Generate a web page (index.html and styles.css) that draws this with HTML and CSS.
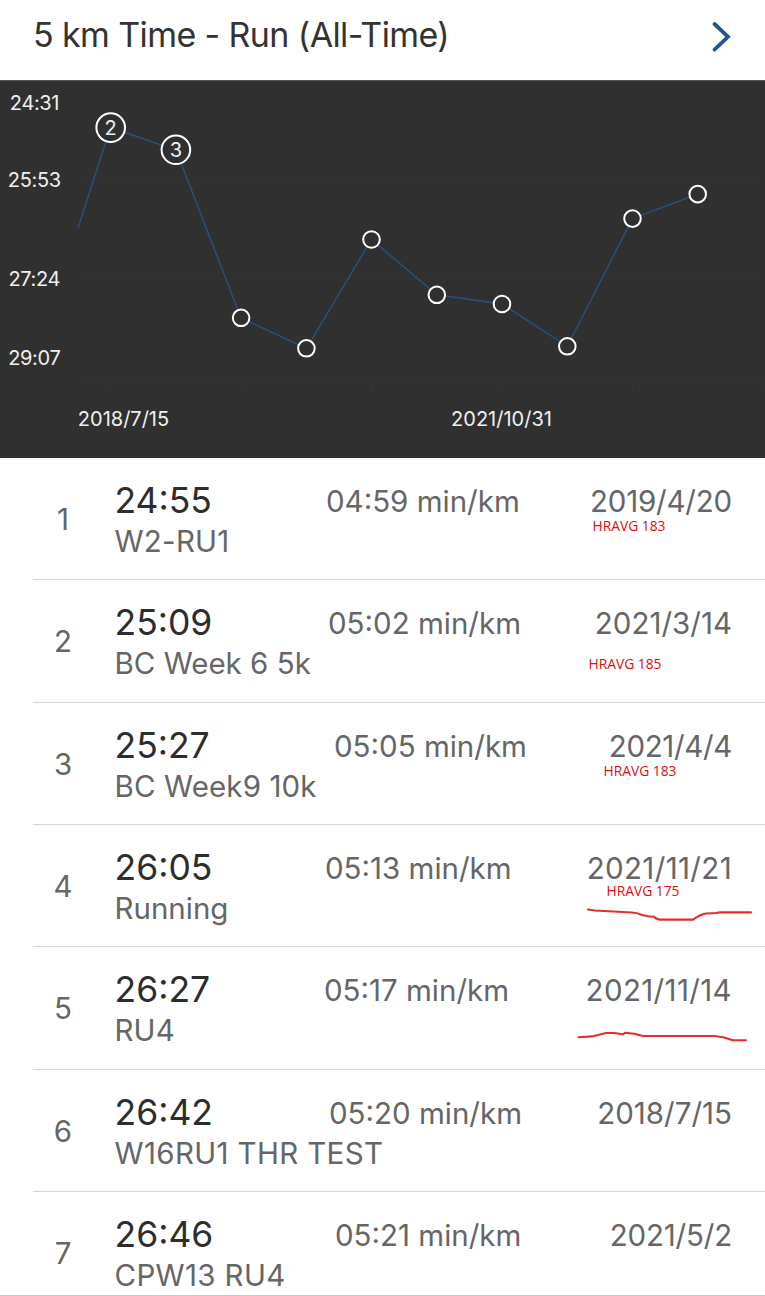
FILE: index.html
```html
<!DOCTYPE html>
<html lang="en">
<head>
<meta charset="utf-8">
<title>5 km Time - Run (All-Time)</title>
<link rel="stylesheet" href="styles.css">
</head>
<body>
<main class="screen">
  <header class="header">
    <h1 class="title">5 km Time - Run (All-Time)</h1>
    <svg class="chevron" width="22" height="34" viewBox="0 0 22 34"><path d="M3.500 4 17 16.800 3.500 29.600"/></svg>
  </header>
  <section class="chart">
    <svg width="765" height="378" viewBox="0 80 765 378">
      <path class="grid" d="M78 180.500H760M78 279H760M78 379H760M110.500 379v12M241 379v12M371.500 379v12M502 379v12M632.500 379v12M763 379v12"/>
      <path class="line" d="M78 228 110.500 127.500 176 150 241 318 306.500 348.300 371.500 239.500 436.800 294.800 502 304 567.300 346.300 632.500 218.600 697.700 194.100"/>
      <g class="points">
        <circle cx="110.700" cy="127.600" r="14.300"/><circle cx="175.900" cy="149.800" r="14.300"/>
        <circle cx="241.100" cy="317.800" r="8.300"/><circle cx="306.400" cy="348.300" r="8.300"/>
        <circle cx="371.500" cy="239.500" r="8.300"/><circle cx="436.800" cy="294.800" r="8.300"/>
        <circle cx="502" cy="304" r="8.300"/><circle cx="567.300" cy="346.300" r="8.300"/>
        <circle cx="632.500" cy="218.600" r="8.300"/><circle cx="697.700" cy="194.100" r="8.300"/>
      </g>
      <g class="labels">
        <g class="axis-y">
          <text x="34.500" y="110.300">24:31</text><text x="34.300" y="187.300">25:53</text>
          <text x="34.300" y="286.400">27:24</text><text x="34.300" y="364.800">29:07</text>
        </g>
        <text x="123.500" y="426.300">2018/7/15</text><text x="501.500" y="426.300">2021/10/31</text>
        <text x="110.700" y="135">2</text><text x="175.900" y="157.200">3</text>
      </g>
    </svg>
  </section>
  <ol class="list">
    <li class="row"><span class="rank">1</span><div class="run"><span class="time">24:55</span><span class="name wide-2">W2-RU1</span></div><span class="pace pace-1">04:59 min/km</span><span class="date tight-1">2019/4/20</span><span class="note note-1">HRAVG 183</span></li>
    <li class="row"><span class="rank">2</span><div class="run"><span class="time">25:09</span><span class="name">BC Week 6 5k</span></div><span class="pace pace-2">05:02 min/km</span><span class="date">2021/3/14</span><span class="note note-2">HRAVG 185</span></li>
    <li class="row"><span class="rank">3</span><div class="run"><span class="time">25:27</span><span class="name wide-1">BC Week9 10k</span></div><span class="pace pace-3">05:05 min/km</span><span class="date tight-2">2021/4/4</span><span class="note note-3">HRAVG 183</span></li>
    <li class="row"><span class="rank">4</span><div class="run"><span class="time">26:05</span><span class="name">Running</span></div><span class="pace pace-4">05:13 min/km</span><span class="date wide-3">2021/11/21</span><span class="note note-4">HRAVG 175</span>
      <svg class="scribble scribble-4" width="172" height="20" viewBox="584 904 172 20"><path d="M588 909.500 595 910.500 632 912.500Q638 913 642 915L648 916.300 654 916.700Q656 919.500 660 919.600H693Q700 914.500 706 913.500L716 913 720 912.400H751"/></svg></li>
    <li class="row"><span class="rank">5</span><div class="run"><span class="time">26:27</span><span class="name wide-1">RU4</span></div><span class="pace pace-5">05:17 min/km</span><span class="date wide-3">2021/11/14</span>
      <svg class="scribble scribble-5" width="176" height="20" viewBox="574 1027 176 20"><path d="M578.500 1037.200 592 1036.400 606 1033H614L623 1034.300 625 1032.800 634 1033.700 643 1036H715L724 1037.500 733 1040.200H746"/></svg></li>
    <li class="row"><span class="rank">6</span><div class="run"><span class="time">26:42</span><span class="name wide-3">W16RU1 THR TEST</span></div><span class="pace pace-6">05:20 min/km</span><span class="date">2018/7/15</span></li>
    <li class="row"><span class="rank">7</span><div class="run"><span class="time">26:46</span><span class="name wide-3">CPW13 RU4</span></div><span class="pace pace-7">05:21 min/km</span><span class="date tight-1">2021/5/2</span></li>
  </ol>
</main>
</body>
</html>
```
FILE: styles.css
```css
* { box-sizing: border-box; }
body { margin: 0; background: #fff; font-family: Inter, "Liberation Sans", sans-serif; }
.screen { width: 765px; height: 1296px; overflow: hidden; display: flex; flex-direction: column; }
.header { height: 80px; flex: none; display: flex; align-items: flex-start; justify-content: space-between; padding: 14px 32px 0 33px; }
.title { margin: 0; font-size: 34px; line-height: 41px; font-weight: 400; color: #333; letter-spacing: -0.600px; white-space: nowrap; }
.chevron { margin-top: 6px; fill: none; stroke: #24568a; stroke-width: 3.800; stroke-linecap: round; }
.chart { height: 378px; flex: none; background: #303030; border-top: 1px solid #555; }
.chart svg { display: block; margin-top: -1px; }
.grid { fill: none; stroke: #343434; stroke-width: 1; }
.line { fill: none; stroke: #265280; stroke-width: 1.400; }
.points { fill: #303030; stroke: #fff; stroke-width: 2; }
.labels { fill: #f0f0f0; font-size: 20px; text-anchor: middle; }
.axis-y { letter-spacing: -0.350px; }
.list { list-style: none; margin: 0; padding: 0; height: 838px; border-bottom: 1px solid #c8c8c8; overflow: hidden; }
.row { position: relative; height: 122.330px; margin-left: 33px; padding-right: 33px; display: flex; align-items: flex-start; border-bottom: 1px solid #d6d6d8; color: #666; font-size: 29.500px; line-height: 36px; white-space: nowrap; }
.row:last-child { border-bottom: 0; }
.rank { width: 60px; margin-top: 43px; text-align: center; }
.run { width: 200px; margin-left: 21.500px; padding-top: 21px; display: flex; flex-direction: column; }
.time { font-size: 35.500px; line-height: 44px; color: #2d2d2d; }
.name { line-height: 36px; }
.wide-1 { letter-spacing: 0.120px; }
.wide-2 { letter-spacing: 0.250px; }
.wide-3 { letter-spacing: 0.350px; }
.tight-1 { letter-spacing: -0.200px; }
.tight-2 { letter-spacing: -0.350px; }
.pace { margin-top: 25px; }
.date { margin: 25px 0 0 auto; }
.pace-1 { margin-left: 11.500px; }
.pace-2 { margin-left: 13.500px; }
.pace-3 { margin-left: 19.500px; }
.pace-4 { margin-left: 10.500px; }
.pace-5 { margin-left: 9.500px; }
.pace-6 { margin-left: 14.500px; }
.pace-7 { margin-left: 20.500px; }
.note { position: absolute; font-family: "Open Sans", "Noto Sans", sans-serif; font-size: 13.800px; line-height: 18px; color: #d9100f; }
.note-1 { left: 559.500px; top: 59px; }
.note-2 { left: 555.500px; top: 75px; }
.note-3 { left: 570.500px; top: 59.500px; }
.note-4 { left: 573.500px; top: 57px; }
.scribble { position: absolute; fill: none; stroke: #e52d2d; stroke-width: 2.100; stroke-linecap: round; stroke-linejoin: round; }
.scribble-4 { left: 551px; top: 79px; }
.scribble-5 { left: 541px; top: 79.700px; }
```
